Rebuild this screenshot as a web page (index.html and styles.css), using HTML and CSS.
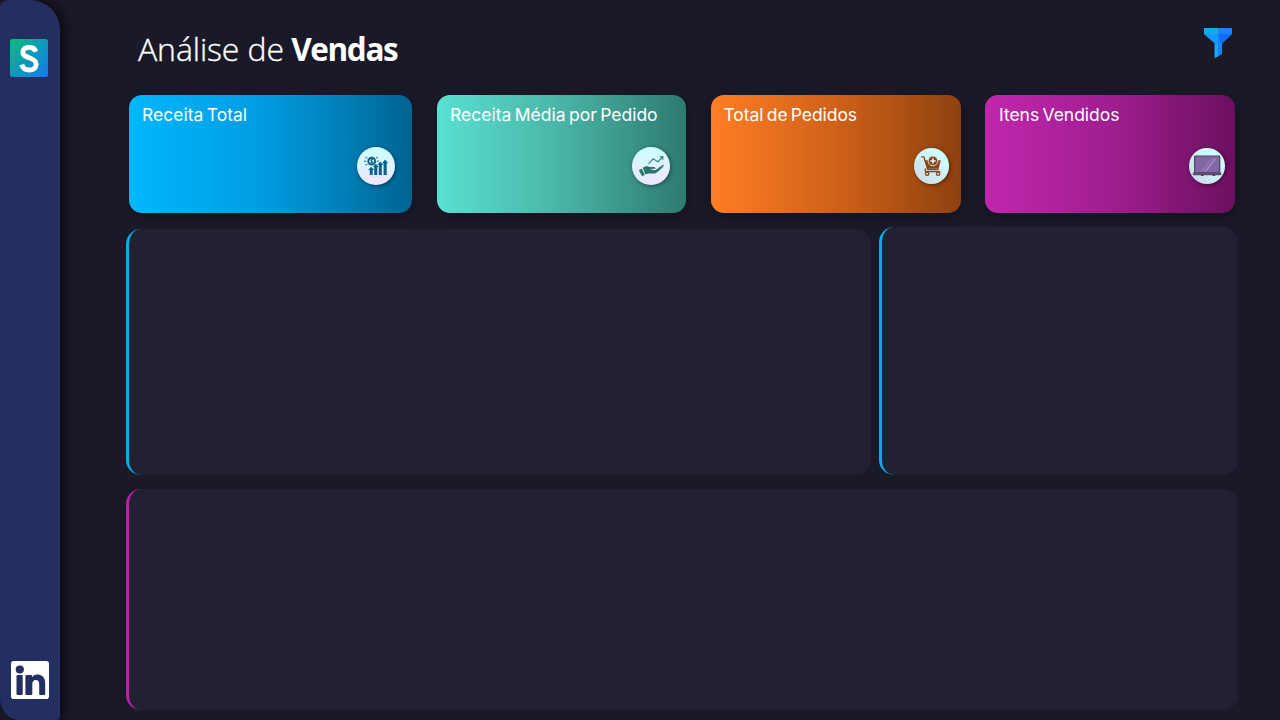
FILE: index.html
```html
<!DOCTYPE html>
<html lang="pt-BR">
<head>
<meta charset="utf-8">
<title>Análise de Vendas</title>
<link rel="stylesheet" href="styles.css">
</head>
<body>
<div class="app">
  <aside class="sidebar">
    <svg class="logo" viewBox="0 0 38 38">
      <defs><linearGradient id="lg" x1="0" y1="0" x2="1" y2="1"><stop offset="0" stop-color="#06bd80"/><stop offset="1" stop-color="#1478f0"/></linearGradient></defs>
      <rect width="38" height="38" rx="2.5" fill="url(#lg)"/>
      <path d="M25.8 12.8C24.7 9.6 22.3 8.2 19.3 8.2C15.7 8.2 12.8 10 12.8 13.2C12.8 16.7 16.2 17.7 19.2 18.8C22.8 20 26.2 21.3 26.2 25.2C26.2 28.9 23.2 31 19.3 31C15.5 31 12.8 29.2 11.8 25.6" fill="none" stroke="#fff" stroke-width="4.9"/>
    </svg>
    <svg class="linkedin" viewBox="0 0 38 38">
      <rect width="38" height="38" rx="2.8" fill="#fff"/>
      <g fill="#222f60"><circle cx="8.8" cy="8.5" r="4.1"/><rect x="5.5" y="14" width="6.2" height="20" rx="1"/>
      <path d="M15.4 14h4.8q1 0 1 1v1.2c1.3-1.9 3-2.6 5.2-2.6 5.4 0 7.8 3.5 7.8 9.2V33q0 1-1 1h-4q-1 0-1-1V23.5c0-3-1-4.6-3.3-4.6-2.4 0-3.6 1.6-3.6 4.6V33q0 1-1 1h-4.9q-1 0-1-1V15q0-1 1-1z"/></g>
    </svg>
  </aside>
  <main class="main">
    <header class="header">
      <h1 class="title"><span class="light">Análise de</span> <span class="strong">Vendas</span></h1>
      <svg class="filter" viewBox="0 0 28 30">
        <path d="M0 0h28v6L18 15.5V26l-7 4V15.5L0 6z" fill="#1686ff"/>
        <path d="M0 0h14v6H0z" fill="#17a9ed"/><path d="M0 6h14v9.5h-3z" fill="#1698f5"/>
        <path d="M14 6h14L18 15.5h-1z" fill="#126cf5"/><path d="M10.5 15.5H14V28.5l-3.5 1.5z" fill="#16aaf0"/>
      </svg>
    </header>
    <section class="cards">
      <article class="card blue"><h2 class="label l1">Receita Total</h2>
        <span class="badge"><svg viewBox="0 0 38 38" fill="#0b6289" stroke="#0b6289">
          <circle cx="14.7" cy="14.2" r="3.4" fill="none" stroke-width="1.9"/>
          <path d="M16 12.8c-.6-1-2.5-.7-2.4.4.1 1 2.3.7 2.3 1.9 0 1-1.9 1.2-2.5.3M14.7 11.7v5M7 14.2h2.2M8.4 10.1l2 1.1M8.4 18.2l2-1.1M19.8 14.2H22M18.8 11.2l2-1.1" fill="none" stroke-width="1"/>
          <path d="M12.7 28v-5h-1.5l3-3.3 3 3.3h-1.5v5zM17.2 28v-8H16l2.8-3.3 2.9 3.3h-1.4v8zM21.8 28V18h-1.4l2.9-3.4 2.9 3.4h-1.4v10zM26.6 28V16.2h-1.5l3-3.6 3 3.6h-1.4V28z" stroke="none"/></svg></span></article>
      <article class="card teal"><h2 class="label l2">Receita Média por Pedido</h2>
        <span class="badge"><svg viewBox="0 0 38 38" fill="#2c7569">
          <path d="M16.5 17l4.7-5.3 4.7 3.2 4.8-5.2M27.8 9.7h3v3" fill="none" stroke="#2c7569" stroke-width="1.1"/>
          <path d="M6.8 23.2l3-1.5 3 6-2.7 1.5zM10.8 21.1c1.8-1.8 3.9-2.2 6-1.3 1.8.7 4.4-.2 6.3.6 1 .5.7 1.3-.4 1.4l-5 .2 5.2 1.2c3.7-2.1 5.8-4.3 8-5.3 1-.4 1.2.6.6 1.3-2.6 3.1-5.2 5.4-8.3 7.2h-5.7c-1.8 0-2.7.2-4 1z"/></svg></span></article>
      <article class="card orange"><h2 class="label l3">Total de Pedidos</h2>
        <span class="badge small"><svg viewBox="0 0 36 36" fill="#8f4310" stroke="#8f4310">
          <path d="M7.5 8.6h2.6l4.2 13h11.2M12.5 20.8c-1.5.6-1.5 3 .2 3h14.4" fill="none" stroke-width="1.4"/>
          <path d="M10.8 12h16.7l-2.2 8.8H13.4z" stroke="none"/>
          <circle cx="19.5" cy="12.8" r="5" stroke="#d5e6ef" stroke-width="1"/><path d="M19.5 10v5.6M16.7 12.8h5.6" stroke="#e4fbff" stroke-width="1.5"/>
          <g fill="none" stroke-width="1.4"><circle cx="13.5" cy="26" r="1.7"/><circle cx="24.8" cy="26" r="1.7"/></g></svg></span></article>
      <article class="card purple"><h2 class="label l4">Itens Vendidos</h2>
        <span class="badge small"><svg viewBox="0 0 36 36">
          <rect x="5.7" y="8.2" width="25" height="16.7" rx=".6" fill="#8367a2" stroke="#53456d" stroke-width="1.3"/>
          <path d="M15 23.5L25.5 10.2h2.3L17.4 23.5zM12 23.5L22.6 10.2h.9L12.9 23.5z" fill="#a184ca"/>
          <path d="M3.8 24.5h28.6v1.7q0 1-1 1H5q-1.2 0-1.2-1z" fill="#5a4d6f"/><path d="M12 27h2.6v1H12zM23.5 27h2.6v1h-2.6z" fill="#722057"/></svg></span></article>
    </section>
    <section class="charts"><div class="panel main-panel"></div><div class="panel side-panel"></div></section>
    <section class="panel bottom-panel"></section>
  </main>
</div>
</body>
</html>
```
FILE: styles.css
```css
* { box-sizing: border-box; }
body { margin: 0; background: #1a1928; overflow: hidden; }
.app { display: flex; width: 1280px; height: 720px; }
.sidebar {
  width: 60px; height: 720px; flex: none; padding: 39px 11px 21px 10px;
  display: flex; flex-direction: column; justify-content: space-between;
  background: #222f60; box-shadow: 5px 0 12px rgba(0,0,0,.6);
  border-radius: 10px 30px 4px 19px / 7px 29px 4px 22px;
}
.logo, .linkedin { width: 38px; height: 38px; }
.linkedin { margin-left: 1px; }
.main { flex: 1; padding: 0 42px 10px 66px; display: flex; flex-direction: column; }
.header { height: 95px; padding: 28px 6px 0 12px; display: flex; justify-content: space-between; align-items: flex-start; }
.title { margin: -1px 0 0; color: #fff; font: 300 32px/44px "Open Sans", "Noto Sans", sans-serif; white-space: pre; }
.light { letter-spacing: -.1px; -webkit-text-stroke: .35px #fff; }
.strong { font-size: 31.5px; font-weight: 700; letter-spacing: -1.4px; margin-left: -1px; }
.filter { width: 28px; height: 30px; }
.cards { display: grid; grid-template-columns: 283px 249px 250px 250px; column-gap: 25px; padding-left: 3px; height: 118px; }
.card { border-radius: 13px; padding: 9px 13px; display: flex; flex-direction: column; box-shadow: 2px 4px 12px rgba(0,0,0,.24); }
.label { margin: 0; color: #fff; font: 400 17.5px/22px Inter, sans-serif; white-space: nowrap; word-spacing: -1.5px; }
.l3 { letter-spacing: -.08px; margin-left: -.5px; }
.l4 { letter-spacing: -.03px; }
.blue { background: linear-gradient(90deg, #00b7ff, #009ade 50%, #006491); }
.teal { background: linear-gradient(90deg, #5ae0d1, #49b4a6 50%, #2e7a70); }
.orange { background: linear-gradient(90deg, #ff7d24, #cf6119 50%, #8e410f); }
.purple { background: linear-gradient(90deg, #c127ae, #a01e90 50%, #6b105f); margin-left: -1px; margin-right: 1px; padding-left: 14px; }
.badge { width: 38px; height: 38px; border-radius: 50%; margin: 21px 4px 0 auto; background: linear-gradient(#ccffff, #f0e4ff); box-shadow: 1px 1px 4px rgba(0,0,0,.45); }
.teal .badge { margin-right: 3px; }
.badge svg { display: block; width: 100%; height: 100%; }
.badge.small { width: 35px; height: 36px; margin: 22px -1px 0 auto; background: linear-gradient(45deg, #ccd5e5, #ccffff 75%); }
.purple .badge.small { width: 36px; margin-right: -3px; }
.charts { display: grid; grid-template-columns: 745px 359px; column-gap: 8px; height: 248px; margin-top: 14px; }
.panel { background: #222033; border-left: 3px solid #00aeef; border-radius: 15px; }
.main-panel { margin-top: 2px; }
.bottom-panel { height: 221px; margin-top: 14px; border-left-color: #b823a7; }
```
